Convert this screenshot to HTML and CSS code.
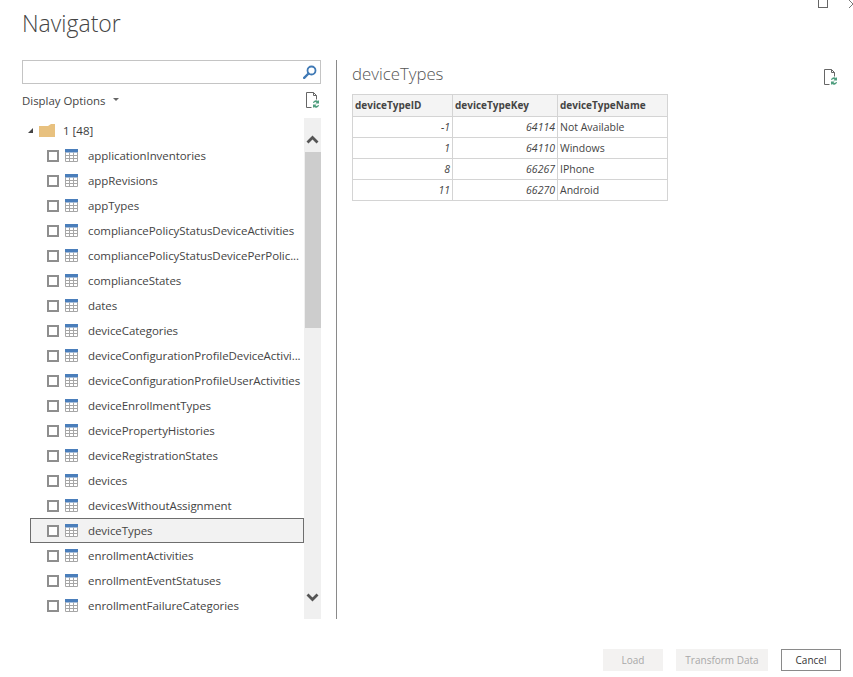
FILE: index.html
```html
<!DOCTYPE html>
<html lang="en">
<head>
<meta charset="utf-8">
<title>Navigator</title>
<link rel="stylesheet" href="styles.css">
</head>
<body>
<svg class="sprites" width="0" height="0" aria-hidden="true">
  <symbol id="refresh" viewBox="0 0 15 17">
    <path d="M1.500 15.500V.5h7l3 3v4M8.500.5v3h3M1.500 15.500h5" fill="none" stroke="#666" stroke-width="1"/>
    <path d="M8 11a3 3 0 0 1 5-2l1-1v3.500h-3.500l1-1a1.800 1.800 0 0 0-2.500.5zM14 13a3 3 0 0 1-5 2l-1 1v-3.500h3.500l-1 1a1.800 1.800 0 0 0 2.500-.5z" fill="#4f9e7e"/>
  </symbol>
  <symbol id="table" viewBox="0 0 13 13">
    <rect x="0" y="0" width="13" height="13" fill="#fff"/>
    <rect x="0" y="0" width="13" height="3.500" fill="#4a7ebb"/>
    <path d="M.5 3v9.500h12V3M.5 6.500h12M.5 9.500h12M4.500 3.500v9M8.500 3.500v9" fill="none" stroke="#a6a6a6" stroke-width="1"/>
  </symbol>
</svg>

<div class="window-controls">
  <span class="win-max"></span>
  <svg class="win-close" width="6" height="9" viewBox="0 0 6 9"><path d="M0 8 5 3M0 0l6 6" fill="none" stroke="#777" stroke-width="1"/></svg>
</div>

<div class="dialog">
  <h1 class="title">Navigator</h1>
  <div class="main">
    <section class="left">
      <div class="search">
        <svg class="search-icon" width="14" height="14" viewBox="0 0 14 14"><circle cx="8.500" cy="5.500" r="4" fill="none" stroke="#3f79b5" stroke-width="1.800"/><path d="M5.500 8.500 1.200 12.800" stroke="#3f79b5" stroke-width="2.400" stroke-linecap="round"/></svg>
      </div>
      <div class="options">
        <span class="options-label">Display Options</span>
        <span class="caret"></span>
        <svg class="options-refresh"><use href="#refresh"/></svg>
      </div>
      <div class="tree">
        <div class="tree-list">
          <div class="folder-row">
            <span class="expander"></span>
            <svg class="folder" width="16" height="13" viewBox="0 0 16 13"><path d="M0 2h9l3-2h4v13H0z" fill="#e8c17f"/></svg>
            <span class="folder-label">1 [48]</span>
          </div>
          <div class="row"><span class="check"></span><svg class="table-icon"><use href="#table"/></svg><span class="name">applicationInventories</span></div>
          <div class="row"><span class="check"></span><svg class="table-icon"><use href="#table"/></svg><span class="name">appRevisions</span></div>
          <div class="row"><span class="check"></span><svg class="table-icon"><use href="#table"/></svg><span class="name">appTypes</span></div>
          <div class="row"><span class="check"></span><svg class="table-icon"><use href="#table"/></svg><span class="name">compliancePolicyStatusDeviceActivities</span></div>
          <div class="row"><span class="check"></span><svg class="table-icon"><use href="#table"/></svg><span class="name">compliancePolicyStatusDevicePerPolic...</span></div>
          <div class="row"><span class="check"></span><svg class="table-icon"><use href="#table"/></svg><span class="name">complianceStates</span></div>
          <div class="row"><span class="check"></span><svg class="table-icon"><use href="#table"/></svg><span class="name">dates</span></div>
          <div class="row"><span class="check"></span><svg class="table-icon"><use href="#table"/></svg><span class="name">deviceCategories</span></div>
          <div class="row"><span class="check"></span><svg class="table-icon"><use href="#table"/></svg><span class="name">deviceConfigurationProfileDeviceActivi...</span></div>
          <div class="row"><span class="check"></span><svg class="table-icon"><use href="#table"/></svg><span class="name">deviceConfigurationProfileUserActivities</span></div>
          <div class="row"><span class="check"></span><svg class="table-icon"><use href="#table"/></svg><span class="name">deviceEnrollmentTypes</span></div>
          <div class="row"><span class="check"></span><svg class="table-icon"><use href="#table"/></svg><span class="name">devicePropertyHistories</span></div>
          <div class="row"><span class="check"></span><svg class="table-icon"><use href="#table"/></svg><span class="name">deviceRegistrationStates</span></div>
          <div class="row"><span class="check"></span><svg class="table-icon"><use href="#table"/></svg><span class="name">devices</span></div>
          <div class="row"><span class="check"></span><svg class="table-icon"><use href="#table"/></svg><span class="name">devicesWithoutAssignment</span></div>
          <div class="row selected"><span class="check"></span><svg class="table-icon"><use href="#table"/></svg><span class="name">deviceTypes</span></div>
          <div class="row"><span class="check"></span><svg class="table-icon"><use href="#table"/></svg><span class="name">enrollmentActivities</span></div>
          <div class="row"><span class="check"></span><svg class="table-icon"><use href="#table"/></svg><span class="name">enrollmentEventStatuses</span></div>
          <div class="row"><span class="check"></span><svg class="table-icon"><use href="#table"/></svg><span class="name">enrollmentFailureCategories</span></div>
        </div>
        <div class="scrollbar">
          <svg class="arrow-up" width="13" height="9" viewBox="0 0 13 9"><path d="M1.500 7.500 6.500 2.500l5 5" fill="none" stroke="#555" stroke-width="2.800"/></svg>
          <div class="thumb"></div>
          <svg class="arrow-down" width="13" height="9" viewBox="0 0 13 9"><path d="M1.500 1.500l5 5 5-5" fill="none" stroke="#555" stroke-width="2.800"/></svg>
        </div>
      </div>
    </section>
    <section class="right">
      <div class="preview-head">
        <h2 class="preview-title">deviceTypes</h2>
        <svg class="preview-refresh"><use href="#refresh"/></svg>
      </div>
      <table class="data">
        <thead>
          <tr><th class="c1">deviceTypeID</th><th class="c2">deviceTypeKey</th><th class="c3">deviceTypeName</th></tr>
        </thead>
        <tbody>
          <tr><td class="num">-1</td><td class="num">64114</td><td>Not Available</td></tr>
          <tr><td class="num">1</td><td class="num">64110</td><td>Windows</td></tr>
          <tr><td class="num">8</td><td class="num">66267</td><td>IPhone</td></tr>
          <tr><td class="num">11</td><td class="num">66270</td><td>Android</td></tr>
        </tbody>
      </table>
    </section>
  </div>
  <div class="footer">
    <button class="btn disabled load" type="button">Load</button>
    <button class="btn disabled transform" type="button">Transform Data</button>
    <button class="btn cancel" type="button">Cancel</button>
  </div>
</div>
</body>
</html>
```
FILE: styles.css
```css
* { box-sizing: border-box; }
html, body { margin: 0; padding: 0; }
body {
  width: 853px;
  height: 677px;
  overflow: hidden;
  background: #fff;
  color: #3c3c3c;
  font-family: "Open Sans", "Noto Sans", sans-serif;
  font-size: 11px;
  position: relative;
}
.sprites { position: absolute; }
.window-controls { position: absolute; top: 0; left: 0; }
.win-max {
  position: absolute;
  left: 818px;
  top: -4px;
  width: 10px;
  height: 12px;
  border: 1px solid #666;
}
.win-close { position: absolute; left: 849px; top: 0; }

.dialog { display: flex; flex-direction: column; height: 677px; padding: 0 12px 0 22px; }
.title {
  margin: 0;
  height: 60px;
  padding-top: 6px;
  font-size: 23px;
  line-height: 34px;
  font-weight: 300;
  color: #444;
}
.main { display: flex; height: 559px; }
.left { width: 299px; display: flex; flex-direction: column; }

.search {
  height: 24px;
  border: 1px solid #c4c4c4;
  display: flex;
  align-items: center;
  justify-content: flex-end;
  padding-right: 3px;
}
.options {
  height: 34px;
  display: flex;
  align-items: center;
  font-size: 11.400px;
  color: #444;
  padding-bottom: 2px;
}
.options-label { width: 91px; }
.caret {
  width: 0;
  height: 0;
  border-left: 3px solid transparent;
  border-right: 3px solid transparent;
  border-top: 3px solid #666;
  margin-top: -2px;
}
.options-refresh { width: 15px; height: 17px; margin-left: auto; margin-right: 1px; }

.tree { flex: 1; display: flex; min-height: 0; }
.tree-list { width: 282px; overflow: hidden; }
.folder-row {
  height: 25px;
  display: flex;
  align-items: center;
  padding-left: 6px;
  font-size: 11.500px;
}
.expander {
  width: 0;
  height: 0;
  border-left: 5px solid transparent;
  border-bottom: 5px solid #444;
  margin-right: 6px;
}
.folder { margin-right: 8px; margin-top: -1px; }
.row {
  height: 25px;
  margin-left: 8px;
  display: flex;
  align-items: center;
  padding-left: 16px;
  border: 1px solid transparent;
  white-space: nowrap;
}
.row.selected { background: #f2f2f2; border-color: #6e6e6e; }
.check {
  width: 12px;
  height: 12px;
  border: 2px solid #8e8e8e;
  background: #fff;
  margin-right: 6px;
  flex: none;
}
.table-icon { width: 13px; height: 13px; margin-right: 10px; margin-top: -1px; flex: none; }
.name { font-size: 11.500px; letter-spacing: -0.06px; color: #444; }

.scrollbar {
  width: 17px;
  background: #f0f0f0;
  display: flex;
  flex-direction: column;
  align-items: center;
}
.arrow-up { margin-top: 17px; margin-bottom: 8px; }
.thumb { width: 16px; height: 176px; background: #cdcdcd; }
.arrow-down { margin-top: auto; margin-bottom: 17px; }

.right {
  margin-left: 15px;
  border-left: 1px solid #8a8a8a;
  padding-left: 15px;
  flex: 1;
}
.preview-head { display: flex; height: 34px; align-items: flex-start; }
.preview-title {
  margin: 0;
  font-size: 16.800px;
  line-height: 28px;
  font-weight: 300;
  color: #555;
}
.preview-refresh { width: 15px; height: 17px; margin-left: auto; margin-top: 9px; margin-right: 3px; }

.data { border-collapse: collapse; font-size: 10.500px; color: #444; table-layout: fixed; width: 316px; }
.data th, .data td { border: 1px solid #d4d4d4; padding: 0 2px; height: 21px; text-align: left; white-space: nowrap; overflow: hidden; }
.data th { background: #f4f4f4; font-weight: 700; height: 22px; font-size: 10px; padding-bottom: 1px; }
.c1 { width: 100px; }
.c2 { width: 105px; }
.c3 { width: 110px; }
.data td.num { text-align: right; font-style: italic; }

.footer {
  display: flex;
  justify-content: flex-end;
  gap: 13px;
  padding-top: 30px;
}
.btn {
  height: 22px;
  font-family: inherit;
  font-size: 10px;
  padding: 0;
  border: 1px solid transparent;
  border-radius: 0;
}
.disabled { background: #f3f2f1; color: #a8a8a8; }
.load { width: 60px; }
.transform { width: 92px; }
.cancel { width: 60px; background: #fff; border-color: #8a8a8a; color: #333; }
```
